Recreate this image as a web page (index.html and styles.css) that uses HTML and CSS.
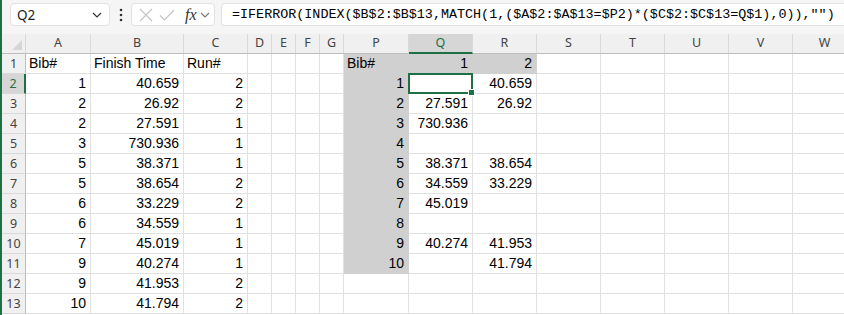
FILE: index.html
```html
<!DOCTYPE html>
<html lang="en">
<head>
    <meta charset="UTF-8">
    <meta name="viewport" content="width=device-width, initial-scale=1.0">
    <title>Hoja</title>
    <link rel="stylesheet" href="styles.css">
</head>
<body>
    <div class="app">
        <div class="toolbar">
            <div class="namebox">
                <span>Q2</span>
                <svg class="chev" width="10" height="6" viewBox="0 0 10 6"><path d="M1 1l4 4 4-4" fill="none" stroke="#333" stroke-width="1.2"/></svg>
            </div>
            <svg class="dots" width="4" height="14" viewBox="0 0 4 14"><circle cx="2" cy="2" r="1.3" fill="#333"/><circle cx="2" cy="7" r="1.3" fill="#333"/><circle cx="2" cy="12" r="1.3" fill="#333"/></svg>
            <div class="fxbox">
                <svg width="14" height="14" viewBox="0 0 14 14"><path d="M1 1l12 12M13 1L1 13" stroke="#c4c4c4" stroke-width="1.2"/></svg>
                <svg width="16" height="14" viewBox="0 0 16 14"><path d="M1 7.5l4.5 4.5L15 2" fill="none" stroke="#c4c4c4" stroke-width="1.2"/></svg>
                <span class="fx">fx</span>
                <svg class="chev" width="10" height="6" viewBox="0 0 10 6"><path d="M1 1l4 4 4-4" fill="none" stroke="#777" stroke-width="1.1"/></svg>
            </div>
            <div class="formula">=IFERROR(INDEX($B$2:$B$13,MATCH(1,($A$2:$A$13=$P2)*($C$2:$C$13=Q$1),0)),"")</div>
        </div>
        <div class="sheet" id="sheet"></div>
    </div>

    <script>
        let columnas = ["A", "B", "C", "D", "E", "F", "G", "P", "Q", "R", "S", "T", "U", "V", "W"];
        let datos = {
            1: { A: "Bib#", B: "Finish Time", C: "Run#", P: "Bib#", Q: 1, R: 2 },
            2: { A: 1, B: 40.659, C: 2, P: 1, R: 40.659 },
            3: { A: 2, B: 26.92, C: 2, P: 2, Q: 27.591, R: 26.92 },
            4: { A: 2, B: 27.591, C: 1, P: 3, Q: 730.936 },
            5: { A: 3, B: 730.936, C: 1, P: 4 },
            6: { A: 5, B: 38.371, C: 1, P: 5, Q: 38.371, R: 38.654 },
            7: { A: 5, B: 38.654, C: 2, P: 6, Q: 34.559, R: 33.229 },
            8: { A: 6, B: 33.229, C: 2, P: 7, Q: 45.019 },
            9: { A: 6, B: 34.559, C: 1, P: 8 },
            10: { A: 7, B: 45.019, C: 1, P: 9, Q: 40.274, R: 41.953 },
            11: { A: 9, B: 40.274, C: 1, P: 10, R: 41.794 },
            12: { A: 9, B: 41.953, C: 2 },
            13: { A: 10, B: 41.794, C: 2 }
        };

        function relleno(fila, col) {
            if (fila === 1 && (col === "P" || col === "Q" || col === "R")) return true;
            return col === "P" && fila >= 2 && fila <= 11;
        }

        function construir() {
            let html = '<div class="row head"><div class="corner"><span class="tri"></span></div>';
            html += columnas.map(c => `<div class="colhdr${c === "Q" ? " sel" : ""}">${c}</div>`).join('');
            html += '</div>';
            for (let f = 1; f <= 13; f++) {
                html += `<div class="row"><div class="rowhdr${f === 2 ? " sel" : ""}">${f}</div>`;
                for (let c of columnas) {
                    let v = datos[f][c];
                    let clases = ["cell"];
                    if (typeof v === "number") clases.push("num");
                    if (relleno(f, c)) clases.push("fill");
                    if (f === 2 && c === "Q") clases.push("active");
                    html += `<div class="${clases.join(' ')}">${v === undefined ? "" : v}</div>`;
                }
                html += '</div>';
            }
            document.getElementById("sheet").innerHTML = html;
        }

        construir();
    </script>
</body>
</html>
```

FILE: styles.css
```css
body {
    margin: 0;
    background: white;
    font-family: "Liberation Sans", Arial, sans-serif;
    color: black;
}
.app {
    width: 842px;
    height: 315px;
    border-left: 2px solid #1e7145;
    overflow: hidden;
}
.toolbar {
    height: 34px;
    background: #f5f5f5;
    display: flex;
    align-items: flex-start;
    padding-top: 3px;
    box-sizing: border-box;
}
.namebox {
    margin-left: 8px;
    width: 100px;
    height: 23px;
    box-sizing: border-box;
    background: white;
    border: 1px solid #e2e2e2;
    border-radius: 4px;
    display: flex;
    align-items: center;
    justify-content: space-between;
    padding: 0 7px 0 6px;
    font-family: "Noto Sans", sans-serif;
    font-size: 13.5px;
    color: #222;
}
.dots {
    margin: 5px 8px 0 9px;
}
.fxbox {
    width: 84px;
    height: 23px;
    box-sizing: border-box;
    background: white;
    border: 1px solid #e2e2e2;
    border-radius: 4px;
    display: flex;
    align-items: center;
    padding-left: 7px;
    gap: 6px;
}
.fx {
    font-family: "Liberation Serif", serif;
    font-style: italic;
    font-size: 16px;
    color: #333;
    margin-left: 4px;
    margin-right: -3px;
}
.fxbox .chev {
    margin-top: 1px;
}
.formula {
    margin-left: 6px;
    flex: 1;
    height: 23px;
    box-sizing: border-box;
    background: white;
    border: 1px solid #e2e2e2;
    border-right: none;
    border-radius: 4px 0 0 4px;
    padding-left: 10px;
    font-family: "Liberation Mono", monospace;
    font-size: 13.4px;
    line-height: 22px;
    white-space: nowrap;
    overflow: hidden;
}
.sheet {
    width: 880px;
}
.row {
    display: grid;
    grid-template-columns: 24px 65px 93px 64px 24px 24px 24px 24px 65px 64px 64px 64px 64px 64px 64px 64px;
    height: 20px;
}
.row > div {
    box-sizing: border-box;
    height: 20px;
}
.head > div {
    background: #f0f0f0;
    border-right: 1px solid #d9d9d9;
    border-bottom: 1px solid #bdbdbd;
    font-family: "Noto Sans", sans-serif;
    font-size: 12.5px;
    color: #444;
    text-align: center;
    line-height: 18px;
}
.corner {
    position: relative;
}
.tri {
    position: absolute;
    right: 3px;
    bottom: 3px;
    width: 0;
    height: 0;
    border-left: 10px solid transparent;
    border-bottom: 10px solid #d6d6d6;
}
.head .sel {
    background: #d6d6d6;
    color: #1e7145;
    border-bottom: 2px solid #1e7145;
}
.rowhdr {
    background: #f0f0f0;
    border-right: 1px solid #bdbdbd;
    border-bottom: 1px solid #d9d9d9;
    font-family: "Noto Sans", sans-serif;
    font-size: 12.5px;
    color: #444;
    text-align: center;
    line-height: 20px;
}
.rowhdr.sel {
    background: #d6d6d6;
    color: #1e7145;
    border-right: 2px solid #1e7145;
}
.cell {
    border-right: 1px solid #e1e1e1;
    border-bottom: 1px solid #e1e1e1;
    font-size: 14px;
    line-height: 19px;
    padding: 0 4px 0 3px;
    white-space: nowrap;
}
.num {
    text-align: right;
}
.fill {
    background: #d0d0d0;
    border-color: #d0d0d0;
}
.active {
    position: relative;
}
.active::after {
    content: "";
    position: absolute;
    left: -1px;
    top: -1px;
    right: -1px;
    bottom: -1px;
    border: 2px solid #1e7145;
}
.active::before {
    content: "";
    position: absolute;
    right: -3px;
    bottom: -3px;
    width: 5px;
    height: 5px;
    background: #1e7145;
    border: 1px solid white;
    z-index: 1;
}
```
